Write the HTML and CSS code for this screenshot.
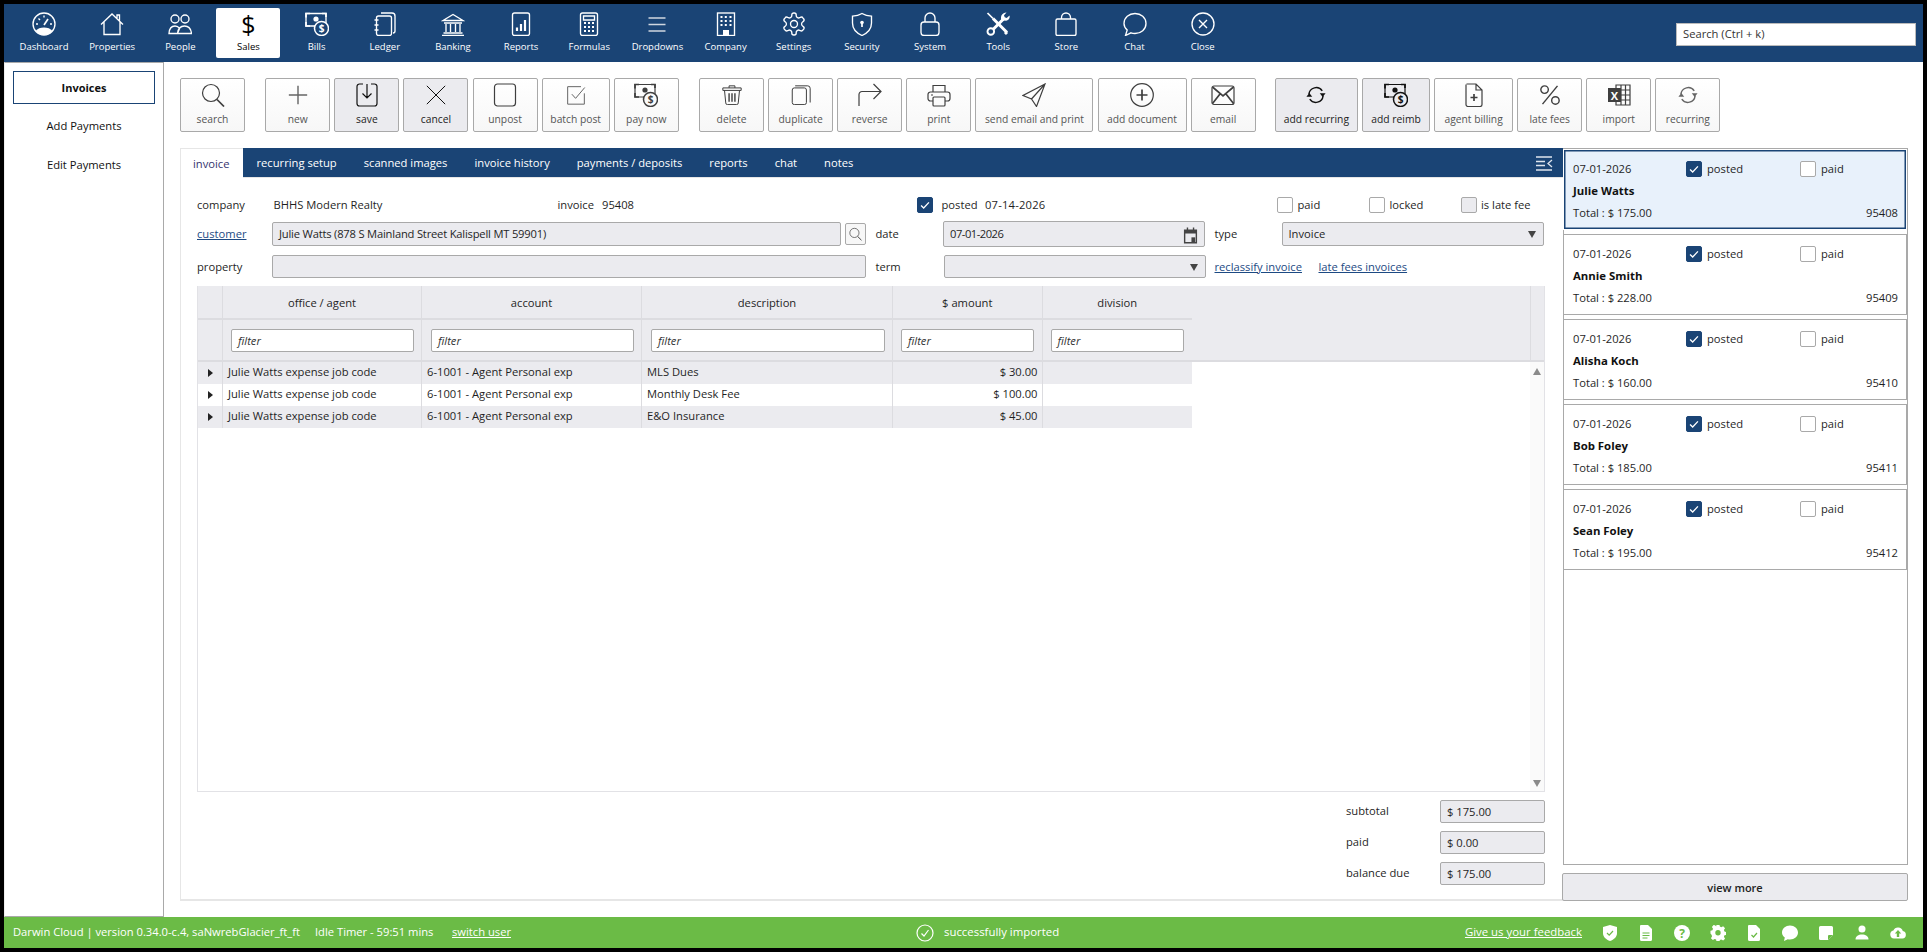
FILE: index.html
```html
<!DOCTYPE html>
<html lang="en">
<head>
<meta charset="utf-8">
<title>Darwin Cloud - Invoices</title>
<link rel="stylesheet" href="styles.css">
</head>
<body>
<svg class="defs" xmlns="http://www.w3.org/2000/svg">
  <symbol id="i-dash" viewBox="0 0 24 24"><circle cx="12" cy="12" r="11"/><path class="solid" d="M3.500 19c2-2.500 5-3.500 8.500-3.500s6.500 1 8.500 3.500a11 11 0 0 1-17 0z"/><path class="thick" d="M12 13l4-6"/><path d="M4 12h2M6.500 6.500 8 8M12 3.500v2M20 12h-2"/></symbol>
  <symbol id="i-home" viewBox="0 0 24 24"><path d="M1 12.500 12 2l11 10.500M4 10v12.500h16V10M17 6V3h2.500v5.500"/></symbol>
  <symbol id="i-people" viewBox="0 0 24 24"><circle cx="7" cy="7" r="4"/><circle cx="17" cy="7" r="4"/><path d="M1 21.500c.3-5 2.500-7.500 6-7.500 2 0 3.500.8 4.500 2.500L9.500 21.500zM9.500 21.500c.5-4.500 3-7.500 7-7.500 4.500 0 6.500 3 7 7.500z"/></symbol>
  <symbol id="i-bills" viewBox="0 0 24 24"><path d="M1 1.500h20V14H1z"/><path class="thick" d="M1 5.500V1.500h4M21 5V1.500h-4M1 10v4h4"/><circle class="solid" cx="11" cy="7" r="2.600"/><circle class="bgfill" cx="16.500" cy="16.500" r="7"/></symbol>
  <symbol id="i-ledger" viewBox="0 0 24 24"><rect x="3.500" y="4" width="15" height="19.500" rx="2"/><path d="M8 1h11a3 3 0 0 1 3 3v15a2 2 0 0 1-2 2M1.500 8h4M1.500 13h4M1.500 18h4"/></symbol>
  <symbol id="i-bank" viewBox="0 0 24 24"><path d="M2 8.500 12 2.500l10 6zM3 11h18M5 12v8M9.500 12v8M14.500 12v8M19 12v8M2.500 21h19M1 23.500h22"/></symbol>
  <symbol id="i-reports" viewBox="0 0 24 24"><rect x="3.500" y="1" width="17" height="22.500" rx="2"/><path class="bar" d="M8 19v-3.500M12 19v-7M16 19V8"/></symbol>
  <symbol id="i-calc" viewBox="0 0 24 24"><rect x="3.500" y="1" width="17" height="22.500" rx="2"/><path d="M6.500 4h11v4h-11z"/><path class="bar" d="M7 11h2M11 11h2M15 11h2M7 15h2M11 15h2M15 15h2M7 19h2M11 19h2M15 19h2"/></symbol>
  <symbol id="i-menu" viewBox="0 0 24 24"><path class="thick" d="M3.500 6h17M3.500 12.500h17M3.500 19h17"/></symbol>
  <symbol id="i-company" viewBox="0 0 24 24"><rect x="3.500" y="1" width="17" height="22.500"/><path class="bar" d="M6.500 5h2M10.800 5h2M15.500 5h2M6.500 9h2M10.800 9h2M15.500 9h2M6.500 13h2M10.800 13h2M15.500 13h2"/><path class="solid" d="M9 18h6v5.500H9z"/></symbol>
  <symbol id="i-gear" viewBox="0 0 24 24"><path d="M12.220 1h-.44a2 2 0 0 0-2 2v.68a2 2 0 0 1-1 1.730l-.43.250a2 2 0 0 1-2 0l-.65-.33a2 2 0 0 0-2.730.73l-.72.880a2 2 0 0 0 .73 2.730l.4.350a2 2 0 0 1 1 1.720v.51a2 2 0 0 1-1 1.740l-.4.340a2 2 0 0 0-.73 2.730l.72.880a2 2 0 0 0 2.730.73l.65-.33a2 2 0 0 1 2 0l.43.250a2 2 0 0 1 1 1.730V21a2 2 0 0 0 2 2h.44a2 2 0 0 0 2-2v-.68a2 2 0 0 1 1-1.730l.43-.250a2 2 0 0 1 2 0l.65.33a2 2 0 0 0 2.730-.73l.72-.890a2 2 0 0 0-.73-2.730l-.4-.330a2 2 0 0 1-1-1.740v-.5a2 2 0 0 1 1-1.740l.4-.340a2 2 0 0 0 .73-2.730l-.72-.880a2 2 0 0 0-2.730-.73l-.65.330a2 2 0 0 1-2 0l-.43-.250a2 2 0 0 1-1-1.730V3a2 2 0 0 0-2-2z"/><circle cx="12" cy="12" r="3.500"/></symbol>
  <symbol id="i-shield" viewBox="0 0 24 24"><path d="M12 1.500c3 1.800 6 2.500 9.500 2.700V11c0 6-4 10-9.500 12.500C6.500 21 2.500 17 2.500 11V4.200C6 4 9 3.300 12 1.500z"/><circle class="solid" cx="12" cy="10.500" r="1.800"/><path class="thick" d="M12 11v4"/></symbol>
  <symbol id="i-lock" viewBox="0 0 24 24"><rect x="3" y="10" width="18" height="13.500" rx="3"/><path d="M7 10V6a5 5 0 0 1 10 0v4"/></symbol>
  <symbol id="i-tools" viewBox="0 0 24 24"><path class="heavy" d="M7 6.500 21 20.500"/><path class="thick" d="M1.500 1 7 6.500"/><path class="heavy" d="M18.500 6 7 17.500"/><circle class="ring" cx="4.800" cy="19.500" r="3.300"/><path class="solid" d="M23.500 3.500 20.700 6l-2-.7-.7-2L20.500.6A5.200 5.200 0 0 0 15 6.500c0 1 .5 2 1 2.500l3-.5c2.500 1 5.500-1.500 4.500-5z"/><path class="heavy" d="M19 20l2 2"/></symbol>
  <symbol id="i-bag" viewBox="0 0 24 24"><rect x="2" y="7" width="20" height="16.500" rx="1.500"/><path d="M7.500 7V5.500a4.500 4.500 0 0 1 9 0V7"/></symbol>
  <symbol id="i-chat" viewBox="0 0 24 24"><path d="M12 1.500c6 0 11 4.200 11 10s-5 10-11 10c-1.500 0-3-.3-4-.7L2.500 23.500l1.700-5.500C2 16 1 14 1 11.500c0-5.800 5-10 11-10z"/></symbol>
  <symbol id="i-close" viewBox="0 0 24 24"><circle cx="12" cy="12" r="11"/><path d="M8 8l8 8M16 8l-8 8"/></symbol>
  <symbol id="i-search" viewBox="0 0 24 24"><circle cx="10" cy="10" r="8.500"/><path class="thick" d="M16 16.500l7 7"/></symbol>
  <symbol id="i-plus" viewBox="0 0 24 24"><path class="thick" d="M12 1v22M1 12h22"/></symbol>
  <symbol id="i-save" viewBox="0 0 24 24"><path d="M8 1H4.500A2.500 2.500 0 0 0 2 3.500v17A2.500 2.500 0 0 0 4.500 23h15a2.500 2.500 0 0 0 2.500-2.500v-17A2.500 2.500 0 0 0 19.500 1H16M12 1v14M7.500 10.500 12 15l4.500-4.500"/></symbol>
  <symbol id="i-x" viewBox="0 0 24 24"><path d="M1 1l22 22M23 1 1 23"/></symbol>
  <symbol id="i-square" viewBox="0 0 24 24"><rect x="1.500" y="1" width="21" height="22" rx="3"/></symbol>
  <symbol id="i-batch" viewBox="0 0 24 24"><path d="M22 10v13H2V2h16"/><path d="M7 11l4.500 5L22.500 3"/></symbol>
  <symbol id="i-trash" viewBox="0 0 24 24"><path d="M1 3.500h22v3H1zM8.500 3.500V1h7v2.500M3 6.500l1.500 15a2 2 0 0 0 2 2h11a2 2 0 0 0 2-2L21 6.500"/><path class="thick" d="M8.500 10v10M12 10v10M15.500 10v10"/></symbol>
  <symbol id="i-copy" viewBox="0 0 24 24"><rect x="1.500" y="3.500" width="17" height="20" rx="2.500"/><path d="M5 1h15a3 3 0 0 1 3 3v17"/></symbol>
  <symbol id="i-reverse" viewBox="0 0 24 24"><path d="M1 23V11.500a3 3 0 0 1 3-3h18.500M15.500 1l7.500 7.500-7.500 7.500"/></symbol>
  <symbol id="i-print" viewBox="0 0 24 24"><path d="M6 9V2.500h12V9M6 18H3.500A2.500 2.500 0 0 1 1 15.500v-4A2.500 2.500 0 0 1 3.500 9h17a2.500 2.500 0 0 1 2.500 2.500v4a2.500 2.500 0 0 1-2.500 2.500H18"/><rect x="6" y="14" width="12" height="9" rx="1"/><path d="M4 12h2"/></symbol>
  <symbol id="i-send" viewBox="0 0 24 24"><path d="M23 1 1 12.500l8.500 3.500 5 7.500zM23 1 9.500 16"/></symbol>
  <symbol id="i-addcircle" viewBox="0 0 24 24"><circle cx="12" cy="12" r="11.300"/><path class="thick" d="M12 6.500v11M6.500 12h11"/></symbol>
  <symbol id="i-mail" viewBox="0 0 24 24"><rect x="1" y="3" width="22" height="18.500" rx="2"/><path class="thick" d="M1.500 4 12 13 22.500 4M1.500 20.500 9 11M22.500 20.500 15 11"/></symbol>
  <symbol id="i-recur" viewBox="0 0 24 24"><path class="thick" d="M3.500 11a8.800 8.800 0 0 1 16-4M20.500 13a8.800 8.800 0 0 1-16 4"/><path class="solid" d="M16.500 10h7L20 14.500zM.5 14h7L4 9.500z"/></symbol>
  <symbol id="i-doc" viewBox="0 0 24 24"><path d="M4.500 1H14l6 6v14.500a2 2 0 0 1-2 2H6a2 2 0 0 1-2-2V1.500M14 1v6h6"/><path class="thick" d="M12 11v7M8.500 14.500h7"/></symbol>
  <symbol id="i-percent" viewBox="0 0 24 24"><path class="thick" d="M21 1 3 23"/><circle class="thickring" cx="5.500" cy="5.500" r="4.500"/><circle class="thickring" cx="18.500" cy="18.500" r="4.500"/></symbol>
  <symbol id="i-excel" viewBox="0 0 24 24"><path class="solid" d="M1 5h13v14H1z"/><path d="M9 2h14v20H9zM14 2v20M18.500 2v20M14 7h9M14 12h9M14 17h9"/></symbol>
  <symbol id="i-cal" viewBox="0 0 16 18"><path class="solid cutout" d="M1 3h3V1h1.500v2h5V1H12v2h3v15H1zM2.500 7.500v9h11v-9z"/><path class="solid" d="M9 11.500h4v5H9z"/></symbol>
  <symbol id="f-shield" viewBox="0 0 16 16"><path class="fill" d="M8 0l7 2v6c0 4-3 6.500-7 8-4-1.500-7-4-7-8V2z"/><path class="greenline" d="M5 8l2.200 2.200L11 6"/></symbol>
  <symbol id="f-doc" viewBox="0 0 16 16"><path class="fill" d="M3 0h7l4 4v10.500a1.500 1.500 0 0 1-1.500 1.500h-9A1.500 1.500 0 0 1 2 14.500V1a1 1 0 0 1 1-1z"/><path class="greenline" d="M4.500 8h7M4.500 10.500h7M4.500 13h5"/></symbol>
  <symbol id="f-help" viewBox="0 0 16 16"><circle class="fill" cx="8" cy="8" r="8"/></symbol>
  <symbol id="f-gear" viewBox="0 0 16 16"><path class="gearfill" d="M6.500 0h3l.5 2.200 1.500.7 2-1.100 2 2.200-1.200 1.900.6 1.600 2.100.5v3l-2.100.5-.6 1.500 1.200 2-2 2-2-1.200-1.500.7-.5 2.200h-3L6 16l-1.500-.6-2 1.100-2-2 1.200-2-.6-1.500L0 9.500v-3l2.100-.5.6-1.600-1.200-1.900 2-2.200 2 1.100L6 2.200z" transform="scale(.94) translate(.5 -.5)"/><circle class="greenfill" cx="8" cy="7.800" r="2.700"/></symbol>
  <symbol id="f-doccheck" viewBox="0 0 16 16"><path class="fill" d="M3 0h7l4 4v10.500a1.500 1.500 0 0 1-1.500 1.500h-9A1.500 1.500 0 0 1 2 14.500V1a1 1 0 0 1 1-1z"/><path class="greenline" d="M5.500 10l2 2 3.500-4"/></symbol>
  <symbol id="f-chat" viewBox="0 0 16 16"><path class="fill" d="M8 .5c4.400 0 8 3 8 7s-3.600 7-8 7c-.8 0-1.500-.1-2.200-.3L2 16l.8-3.400C1 11.200 0 9.500 0 7.500c0-4 3.600-7 8-7z"/></symbol>
  <symbol id="f-note" viewBox="0 0 16 16"><path class="fill" d="M2.500 1h11A1.500 1.500 0 0 1 15 2.500V10l-5 5H2.500A1.500 1.500 0 0 1 1 13.500v-11A1.500 1.500 0 0 1 2.500 1z"/><path class="greenfill" d="M15 10h-4a1 1 0 0 0-1 1v4z"/></symbol>
  <symbol id="f-user" viewBox="0 0 16 16"><circle class="fill" cx="8" cy="4" r="3.500"/><path class="fill" d="M1.500 14.500c0-3.500 3-5 6.500-5s6.500 1.500 6.500 5z"/></symbol>
  <symbol id="f-cloud" viewBox="0 0 16 16"><path class="fill" d="M4 13.500a4 4 0 0 1-.6-7.900A5 5 0 0 1 12.800 6 3.800 3.800 0 0 1 12.500 13.500z"/><path class="greenfill" d="M8 5l3.200 3.500H9.200v3.500H6.800V8.500H4.800z"/></symbol>
</svg>

<div class="app">
  <header class="topbar">
    <nav class="topnav">
      <a class="topitem"><svg class="topicon"><use href="#i-dash"/></svg><span>Dashboard</span></a>
      <a class="topitem"><svg class="topicon"><use href="#i-home"/></svg><span>Properties</span></a>
      <a class="topitem"><svg class="topicon"><use href="#i-people"/></svg><span>People</span></a>
      <a class="topitem is-active"><span class="dollar">$</span><span>Sales</span></a>
      <a class="topitem"><svg class="topicon" viewBox="0 0 24 24"><use href="#i-bills"/><text class="coin" x="16.500" y="20.300" text-anchor="middle">$</text></svg><span>Bills</span></a>
      <a class="topitem"><svg class="topicon"><use href="#i-ledger"/></svg><span>Ledger</span></a>
      <a class="topitem"><svg class="topicon"><use href="#i-bank"/></svg><span>Banking</span></a>
      <a class="topitem"><svg class="topicon"><use href="#i-reports"/></svg><span>Reports</span></a>
      <a class="topitem"><svg class="topicon"><use href="#i-calc"/></svg><span>Formulas</span></a>
      <a class="topitem"><svg class="topicon menuicon"><use href="#i-menu"/></svg><span>Dropdowns</span></a>
      <a class="topitem"><svg class="topicon"><use href="#i-company"/></svg><span>Company</span></a>
      <a class="topitem"><svg class="topicon"><use href="#i-gear"/></svg><span>Settings</span></a>
      <a class="topitem"><svg class="topicon"><use href="#i-shield"/></svg><span>Security</span></a>
      <a class="topitem"><svg class="topicon"><use href="#i-lock"/></svg><span>System</span></a>
      <a class="topitem"><svg class="topicon"><use href="#i-tools"/></svg><span>Tools</span></a>
      <a class="topitem"><svg class="topicon"><use href="#i-bag"/></svg><span>Store</span></a>
      <a class="topitem"><svg class="topicon"><use href="#i-chat"/></svg><span>Chat</span></a>
      <a class="topitem"><svg class="topicon"><use href="#i-close"/></svg><span>Close</span></a>
    </nav>
    <div class="topsearch">Search (Ctrl + k)</div>
  </header>

  <div class="middle">
    <aside class="sidebar">
      <a class="sidelink is-active">Invoices</a>
      <a class="sidelink">Add Payments</a>
      <a class="sidelink">Edit Payments</a>
    </aside>

    <main class="content">
      <div class="toolbar">
        <div class="toolgroup">
          <button class="tool w65"><svg class="toolicon"><use href="#i-search"/></svg>search</button>
        </div>
        <div class="toolgroup">
          <button class="tool w65 muted"><svg class="toolicon small"><use href="#i-plus"/></svg>new</button>
          <button class="tool w65 on"><svg class="toolicon"><use href="#i-save"/></svg>save</button>
          <button class="tool w65 on"><svg class="toolicon small"><use href="#i-x"/></svg>cancel</button>
          <button class="tool w65"><svg class="toolicon"><use href="#i-square"/></svg>unpost</button>
          <button class="tool w69 muted"><svg class="toolicon small"><use href="#i-batch"/></svg>batch post</button>
          <button class="tool w65"><svg class="toolicon" viewBox="0 0 24 24"><use href="#i-bills"/><text class="coin" x="16.500" y="20.300" text-anchor="middle">$</text></svg>pay now</button>
        </div>
        <div class="toolgroup">
          <button class="tool w65"><svg class="toolicon small"><use href="#i-trash"/></svg>delete</button>
          <button class="tool w65"><svg class="toolicon small"><use href="#i-copy"/></svg>duplicate</button>
          <button class="tool w65"><svg class="toolicon"><use href="#i-reverse"/></svg>reverse</button>
          <button class="tool w65"><svg class="toolicon"><use href="#i-print"/></svg>print</button>
          <button class="tool w118"><svg class="toolicon"><use href="#i-send"/></svg>send email and print</button>
          <button class="tool w89"><svg class="toolicon"><use href="#i-addcircle"/></svg>add document</button>
          <button class="tool w65"><svg class="toolicon"><use href="#i-mail"/></svg>email</button>
        </div>
        <div class="toolgroup">
          <button class="tool w83 on"><svg class="toolicon small"><use href="#i-recur"/></svg>add recurring</button>
          <button class="tool w68 on"><svg class="toolicon" viewBox="0 0 24 24"><use href="#i-bills"/><text class="coin" x="16.500" y="20.300" text-anchor="middle">$</text></svg>add reimb</button>
          <button class="tool w79"><svg class="toolicon"><use href="#i-doc"/></svg>agent billing</button>
          <button class="tool w65"><svg class="toolicon small"><use href="#i-percent"/></svg>late fees</button>
          <button class="tool w65"><svg class="toolicon" viewBox="0 0 24 24"><use href="#i-excel"/><text class="xl" x="7.500" y="16.500" text-anchor="middle">X</text></svg>import</button>
          <button class="tool w65 muted"><svg class="toolicon small"><use href="#i-recur"/></svg>recurring</button>
        </div>
      </div>

      <div class="workspace">
        <section class="panel">
          <div class="tabs">
            <a class="tab is-active">invoice</a>
            <a class="tab">recurring setup</a>
            <a class="tab">scanned images</a>
            <a class="tab">invoice history</a>
            <a class="tab">payments / deposits</a>
            <a class="tab">reports</a>
            <a class="tab">chat</a>
            <a class="tab">notes</a>
            <svg class="tabcollapse" viewBox="0 0 18 16"><path d="M1 2h16M1 6.500h9M1 10.500h9M1 15h16M17 5l-4 3.500 4 3.500"/></svg>
          </div>

          <div class="panelbody">
            <div class="formrow row-meta">
              <span>company</span><span>BHHS Modern Realty</span><span>invoice</span><span>95408</span>
              <span class="check checked"><svg viewBox="0 0 16 16"><path d="M3.500 8.500 6.500 11.500 12.500 5"/></svg></span><span>posted</span><span class="wide">07-14-2026</span>
              <span class="check"></span><span>paid</span>
              <span class="check"></span><span>locked</span>
              <span class="check grey"></span><span>is late fee</span>
            </div>
            <div class="formrow row-customer">
              <a class="link">customer</a>
              <div class="field snug">Julie Watts (878 S Mainland Street Kalispell MT 59901)</div>
              <button class="lookup"><svg><use href="#i-search"/></svg></button>
              <span class="indent">date</span>
              <div class="field tall split">07-01-2026<svg class="calicon"><use href="#i-cal"/></svg></div>
              <span class="indent">type</span>
              <div class="field split">Invoice<span class="caret"></span></div>
            </div>
            <div class="formrow row-property">
              <span class="lower">property</span>
              <div class="field"></div>
              <span class="indent lower">term</span>
              <div class="field split"><span class="caret"></span></div>
              <div class="links lower"><a class="link">reclassify invoice</a><a class="link">late fees invoices</a></div>
            </div>

            <div class="grid">
              <div class="gridhead">
                <div class="headcols">
                  <div class="gcols titles"><div></div><div>office / agent</div><div>account</div><div>description</div><div>$ amount</div><div>division</div></div>
                  <div class="gcols filters">
                    <div></div>
                    <div><span class="filter">filter</span></div>
                    <div><span class="filter">filter</span></div>
                    <div><span class="filter">filter</span></div>
                    <div><span class="filter">filter</span></div>
                    <div><span class="filter">filter</span></div>
                  </div>
                </div>
                <div class="headspacer"></div>
              </div>
              <div class="gridbody">
                <div class="rows">
                  <div class="gcols datarow"><div class="arrowcell"><i class="arrow"></i></div><div>Julie Watts expense job code</div><div>6-1001 - Agent Personal exp</div><div>MLS Dues</div><div class="num">$ 30.00</div><div></div></div>
                  <div class="gcols datarow"><div class="arrowcell"><i class="arrow"></i></div><div>Julie Watts expense job code</div><div>6-1001 - Agent Personal exp</div><div>Monthly Desk Fee</div><div class="num">$ 100.00</div><div></div></div>
                  <div class="gcols datarow"><div class="arrowcell"><i class="arrow"></i></div><div>Julie Watts expense job code</div><div>6-1001 - Agent Personal exp</div><div>E&amp;O Insurance</div><div class="num">$ 45.00</div><div></div></div>
                </div>
                <div class="scroller"><i class="scrollup"></i><i class="scrolldown"></i></div>
              </div>
            </div>

            <div class="totals">
              <div class="totalrow"><span>subtotal</span><div class="field">$ 175.00</div></div>
              <div class="totalrow"><span>paid</span><div class="field">$ 0.00</div></div>
              <div class="totalrow"><span>balance due</span><div class="field">$ 175.00</div></div>
            </div>
          </div>
        </section>

        <aside class="rightcol">
          <div class="cardlist">
            <article class="card is-active">
              <span>07-01-2026</span><span class="cardcheck"><span class="check checked"><svg viewBox="0 0 16 16"><path d="M3.500 8.500 6.500 11.500 12.500 5"/></svg></span>posted</span><span class="cardcheck"><span class="check"></span>paid</span>
              <strong>Julie Watts</strong>
              <span class="cardtotal">Total : $ 175.00</span><span class="cardnum">95408</span>
            </article>
            <article class="card">
              <span>07-01-2026</span><span class="cardcheck"><span class="check checked"><svg viewBox="0 0 16 16"><path d="M3.500 8.500 6.500 11.500 12.500 5"/></svg></span>posted</span><span class="cardcheck"><span class="check"></span>paid</span>
              <strong>Annie Smith</strong>
              <span class="cardtotal">Total : $ 228.00</span><span class="cardnum">95409</span>
            </article>
            <article class="card">
              <span>07-01-2026</span><span class="cardcheck"><span class="check checked"><svg viewBox="0 0 16 16"><path d="M3.500 8.500 6.500 11.500 12.500 5"/></svg></span>posted</span><span class="cardcheck"><span class="check"></span>paid</span>
              <strong>Alisha Koch</strong>
              <span class="cardtotal">Total : $ 160.00</span><span class="cardnum">95410</span>
            </article>
            <article class="card">
              <span>07-01-2026</span><span class="cardcheck"><span class="check checked"><svg viewBox="0 0 16 16"><path d="M3.500 8.500 6.500 11.500 12.500 5"/></svg></span>posted</span><span class="cardcheck"><span class="check"></span>paid</span>
              <strong>Bob Foley</strong>
              <span class="cardtotal">Total : $ 185.00</span><span class="cardnum">95411</span>
            </article>
            <article class="card">
              <span>07-01-2026</span><span class="cardcheck"><span class="check checked"><svg viewBox="0 0 16 16"><path d="M3.500 8.500 6.500 11.500 12.500 5"/></svg></span>posted</span><span class="cardcheck"><span class="check"></span>paid</span>
              <strong>Sean Foley</strong>
              <span class="cardtotal">Total : $ 195.00</span><span class="cardnum">95412</span>
            </article>
          </div>
          <button class="viewmore">view more</button>
        </aside>
      </div>
    </main>
  </div>

  <footer class="statusbar">
    <div class="statusleft"><span class="version">Darwin Cloud | version 0.34.0-c.4, saNwrebGlacier_ft_ft</span><span class="idle">Idle Timer - 59:51 mins</span><a class="switch">switch user</a></div>
    <div class="statusmid"><svg viewBox="0 0 18 18"><circle cx="9" cy="9" r="8"/><path d="M5.500 9.500 8 12l4.500-6"/></svg>successfully imported</div>
    <div class="statusright">
      <a class="feedback">Give us your feedback</a>
      <svg class="ficon"><use href="#f-shield"/></svg>
      <svg class="ficon"><use href="#f-doc"/></svg>
      <svg class="ficon" viewBox="0 0 16 16"><use href="#f-help"/><text class="helpmark" x="8" y="12.500" text-anchor="middle">?</text></svg>
      <svg class="ficon"><use href="#f-gear"/></svg>
      <svg class="ficon"><use href="#f-doccheck"/></svg>
      <svg class="ficon"><use href="#f-chat"/></svg>
      <svg class="ficon"><use href="#f-note"/></svg>
      <svg class="ficon"><use href="#f-user"/></svg>
      <svg class="ficon"><use href="#f-cloud"/></svg>
    </div>
  </footer>
</div>
</body>
</html>
```

FILE: styles.css
```css
* { box-sizing: border-box; }
:root {
  --blue: #1a4475;
  --green: #6bbb46;
  --grey: #ebebef;
  --line: #a9a9a9;
  --soft: #e2e2e6;
  --text: #1f1f1f;
}
html, body { height: 100%; }
body {
  margin: 0;
  padding: 4px;
  background: #000;
  overflow: hidden;
  font: 11.2px/1.3 "Open Sans", "Noto Sans", sans-serif;
  color: var(--text);
}
.defs { position: absolute; width: 0; height: 0; }
svg { display: block; fill: none; stroke: currentColor; stroke-width: 1.2; }
.solid { fill: currentColor; stroke: none; }
.cutout { fill-rule: evenodd; }
.fill { fill: #fff; stroke: none; }
.thick { stroke-width: 1.7; }
.heavy { stroke-width: 3; }
.ring { stroke-width: 1.9; }
.thickring { stroke-width: 1.7; }
.bar { stroke-width: 2.2; }
.bgfill { fill: var(--icon-bg, #fff); stroke-width: 1.5; }
.coin { font: 700 10px "Open Sans", sans-serif; fill: currentColor; stroke: none; }
.xl { font: 700 11px "Open Sans", sans-serif; fill: #fff; stroke: none; }
.helpmark { font: 700 12px "Open Sans", sans-serif; fill: var(--green); stroke: none; }
.gearfill { fill: #fff; stroke: none; }
.greenfill { fill: var(--green); stroke: none; }
.greenline { stroke: var(--green); stroke-width: 1.2; }

.app {
  width: 1919px;
  height: 944px;
  display: flex;
  flex-direction: column;
  background: #fff;
}

/* top bar */
.topbar {
  height: 58px;
  flex: none;
  background: var(--blue);
  display: flex;
  justify-content: space-between;
  padding: 4px 7px 4px 8px;
  color: #fff;
  --icon-bg: var(--blue);
}
.topnav { display: flex; gap: 4.17px; }
.topitem {
  width: 64px;
  height: 50px;
  border-radius: 2px;
  display: flex;
  flex-direction: column;
  align-items: center;
  padding-top: 4px;
  font-size: 9.5px;
  white-space: nowrap;
}
.topitem span:last-child { margin-top: 5px; }
.topicon { width: 24px; height: 24px; flex: none; stroke-width: 1.35; }
.menuicon { color: #cfd6e0; }
.topitem.is-active { background: #fff; color: #000; }
.dollar { font-size: 25px; line-height: 24px; height: 24px; font-family: "Open Sans", sans-serif; }
.topsearch {
  align-self: center;
  width: 240px;
  height: 23px;
  margin-top: 2px;
  background: #fff;
  color: #333;
  border: 1px solid #bbb;
  padding: 3px 6px;
}

/* sidebar */
.middle { flex: 1; display: flex; min-height: 0; }
.sidebar {
  width: 160px;
  flex: none;
  border-right: 1px solid var(--line);
  border-bottom: 1px solid var(--line);
  border-left: 1px solid #eee;
  padding: 8px 8px 0 8px;
  display: flex;
  flex-direction: column;
  gap: 5.5px;
  border-top: 1px solid var(--line);
}
.sidelink { height: 33px; display: flex; align-items: center; justify-content: center; color: #111; padding-top: 1px; }
.sidelink.is-active { border: 1px solid var(--blue); font-weight: 700; font-size: 11px; }

/* toolbar */
.content { flex: 1; min-width: 0; padding: 16px 15px 16px 16px; display: flex; flex-direction: column; }
.toolbar { display: flex; gap: 20.3px; height: 54px; flex: none; margin-bottom: 16px; }
.toolgroup { display: flex; gap: 4.1px; }
.toolgroup:last-child { margin-left: -1px; }
.tool {
  height: 54px;
  padding: 4px 0 0;
  display: flex;
  flex-direction: column;
  align-items: center;
  gap: 5px;
  background: linear-gradient(#fff, #f7f7f7);
  border: 1px solid var(--line);
  border-radius: 2px;
  font: 10.3px/14px "Open Sans", sans-serif;
  color: #555;
  white-space: nowrap;
  --icon-bg: #fafafa;
}
.toolicon { width: 24px; height: 24px; color: #3f3f3f; flex: none; }
.toolicon.small { width: 20px; height: 20px; margin: 2px 0; }
.tool.on { background: var(--grey); color: #222; --icon-bg: var(--grey); }
.tool.on .toolicon { color: #111; }
.tool.muted .toolicon { color: #666; }
.w65 { width: 65px; }
.w68 { width: 68px; }
.w69 { width: 68px; }
.w79 { width: 79px; }
.w83 { width: 83px; }
.w89 { width: 89px; }
.w118 { width: 118px; }

/* panel */
.workspace { flex: 1; display: flex; min-height: 0; }
.panel {
  width: 1383px;
  flex: none;
  display: flex;
  flex-direction: column;
  border: 1px solid #e6e6e6;
  border-width: 0 0 2px 1px;
}
.tabs {
  height: 30px;
  flex: none;
  background: var(--blue);
  display: flex;
  align-items: center;
  color: #fff;
  border-bottom: 1px solid #e6e6e6;
}
.tab { padding: 0 13.5px; line-height: 29px; height: 30px; }
.tab.is-active { width: 62px; background: #fff; color: #35346e; padding: 0 12px; border-top: 1px solid #e6e6e6; }
.tabcollapse { width: 18px; height: 16px; margin-left: auto; margin-right: 10px; stroke: #dfe5ee; stroke-width: 1.3; }

.panelbody { flex: 1; display: flex; flex-direction: column; padding: 19px 18px 14px 16px; min-height: 0; }
.formrow { display: grid; align-items: center; white-space: nowrap; }
.row-meta {
  height: 16px;
  grid-template-columns: 76.5px 284px 44.5px 315px 24.5px 43.5px 292px 20.5px 71.5px 20.5px 71.5px 20px auto;
}
.wide { letter-spacing: .2px; }
.row-customer {
  margin-top: 8px;
  height: 26px;
  grid-template-columns: 75px 568.5px 25.5px 77px 262px 76.5px 262px;
}
.row-property {
  margin-top: 8px;
  height: 23px;
  grid-template-columns: 75px 594px 77.5px 262px auto;
}
.lower { padding-top: 1px; }
.indent { padding-left: 9.5px; }
.link { color: #1d4a83; text-decoration: underline; }
.links { display: flex; gap: 16.5px; padding-left: 9px; }
.field {
  height: 24px;
  background: var(--grey);
  border: 1px solid var(--line);
  border-radius: 2px;
  padding: 1px 6px 0;
  display: flex;
  align-items: center;
}
.field.snug { letter-spacing: -.2px; }
.row-property .field { height: 23px; }
.field.tall { height: 26px; letter-spacing: -.5px; }
.field.split { justify-content: space-between; }
.caret {
  width: 0; height: 0;
  border-left: 4px solid transparent;
  border-right: 4px solid transparent;
  border-top: 7px solid #444;
  margin-left: auto;
  margin-right: 1px;
}
.calicon { width: 15px; height: 18px; color: #444; }
.lookup {
  justify-self: end;
  width: 21px;
  height: 22px;
  background: #f7f7f7;
  border: 1px solid var(--line);
  border-radius: 2px;
  padding: 3px;
  color: #333;
}
.lookup svg { width: 13px; height: 14px; }

.check {
  width: 16px;
  height: 16px;
  display: block;
  background: #fff;
  border: 1px solid var(--line);
  border-radius: 2px;
  flex: none;
}
.check.checked { background: var(--blue); border-color: var(--blue); }
.check.checked svg { width: 14px; height: 14px; stroke: #fff; stroke-width: 1.5; }
.check.grey { background: var(--grey); }

/* grid */
.grid {
  flex: 1;
  margin-top: 8px;
  display: flex;
  flex-direction: column;
  min-height: 0;
  border: 1px solid var(--soft);
  border-top: 0;
}
.gridhead { display: flex; background: var(--grey); border-bottom: 2px solid #dcdce0; flex: none; }
.headcols { flex: 1; }
.headspacer { width: 14px; border-left: 1px solid #dcdce0; }
.gcols { display: grid; grid-template-columns: 25px 199px 220px 251px 149.5px 149.5px; width: 994px; }
.gcols > div { border-right: 1px solid #dcdce0; }
.gcols > div:last-child { border-right: 0; }
.titles { height: 34px; border-bottom: 2px solid #dcdce0; }
.titles > div { display: flex; align-items: center; justify-content: center; padding-top: 2px; }
.filters { height: 40px; }
.filters > div { padding: 9px 7px 0 8px; }
.filters > div:first-child { padding: 0; }
.filters > div:nth-child(3), .filters > div:nth-child(4) { padding-left: 9px; }
.filters > div:nth-child(5), .filters > div:nth-child(6) { padding-right: 8px; }
.filter {
  display: block;
  height: 23px;
  background: #fff;
  border: 1px solid var(--line);
  border-radius: 2px;
  padding: 0 6px;
  font-style: italic;
  line-height: 21px;
  color: #333;
}
.gridbody { flex: 1; display: flex; min-height: 0; }
.rows { flex: 1; }
.datarow { height: 22px; line-height: 20px; white-space: nowrap; }
.datarow:nth-child(odd) { background: var(--grey); }
.datarow > div { padding: 0 4px 0 5px; }
.datarow > .arrowcell { padding: 0; display: flex; align-items: center; justify-content: center; }
.arrow { width: 0; height: 0; border-top: 4px solid transparent; border-bottom: 4px solid transparent; border-left: 5px solid #222; }
.num { text-align: right; }
.scroller {
  width: 14px;
  background: #fafafa;
  display: flex;
  flex-direction: column;
  justify-content: space-between;
  align-items: center;
  padding: 6px 0 4px;
}
.scrollup, .scrolldown { width: 0; height: 0; border-left: 4.5px solid transparent; border-right: 4.5px solid transparent; }
.scrollup { border-bottom: 7px solid #8a8a8a; }
.scrolldown { border-top: 7px solid #8a8a8a; }

/* totals */
.totals { flex: none; margin-top: 8px; display: flex; flex-direction: column; gap: 8px; align-items: flex-end; }
.totalrow { display: grid; grid-template-columns: 94px 105px; align-items: center; }
.totalrow .field { height: 23px; }

/* right list */
.rightcol { flex: 1; display: flex; flex-direction: column; gap: 8px; min-width: 0; }
.cardlist { flex: 1; border: 1px solid var(--line); display: flex; flex-direction: column; gap: 4px; min-height: 0; }
.card {
  height: 81px;
  flex: none;
  border: 1px solid var(--line);
  padding: 8px 8px 0 9px;
  display: grid;
  grid-template-columns: 113px 114px 1fr;
  grid-template-rows: 22px 22px 22px;
  align-items: center;
  margin: 0 0 0 -1px;
}
.card strong { grid-column: 1 / 4; font-size: 11.4px; color: #111; }
.cardtotal { grid-column: 1 / 3; }
.cardnum { text-align: right; }
.cardcheck { display: flex; align-items: center; gap: 5px; }
.card.is-active {
  background: #e8f1fb;
  border: 1px solid #fff;
  box-shadow: inset 0 0 0 1.5px var(--blue);
}
.viewmore {
  height: 28px;
  flex: none;
  margin-left: -1px;
  background: var(--grey);
  border: 1px solid var(--line);
  border-radius: 2px;
  font: 600 11px "Open Sans", sans-serif;
  color: #222;
}

/* status bar */
.statusbar {
  height: 31px;
  flex: none;
  background: var(--green);
  color: #fff;
  display: grid;
  grid-template-columns: 895px 480px 1fr;
  align-items: center;
  padding-left: 9px;
  padding-right: 17px;
}
.statusleft { display: flex; white-space: nowrap; font-size: 11.2px; }
.version { width: 302px; }
.idle { width: 137px; }
.switch { text-decoration: underline; }
.statusmid { display: flex; align-items: center; gap: 10px; padding-left: 8px; font-size: 11.4px; }
.statusmid svg { width: 18px; height: 18px; }
.statusright { display: flex; justify-content: flex-end; align-items: center; gap: 20px; }
.feedback { text-decoration: underline; font-size: 11.4px; }
.ficon { width: 16px; height: 16px; }
```
